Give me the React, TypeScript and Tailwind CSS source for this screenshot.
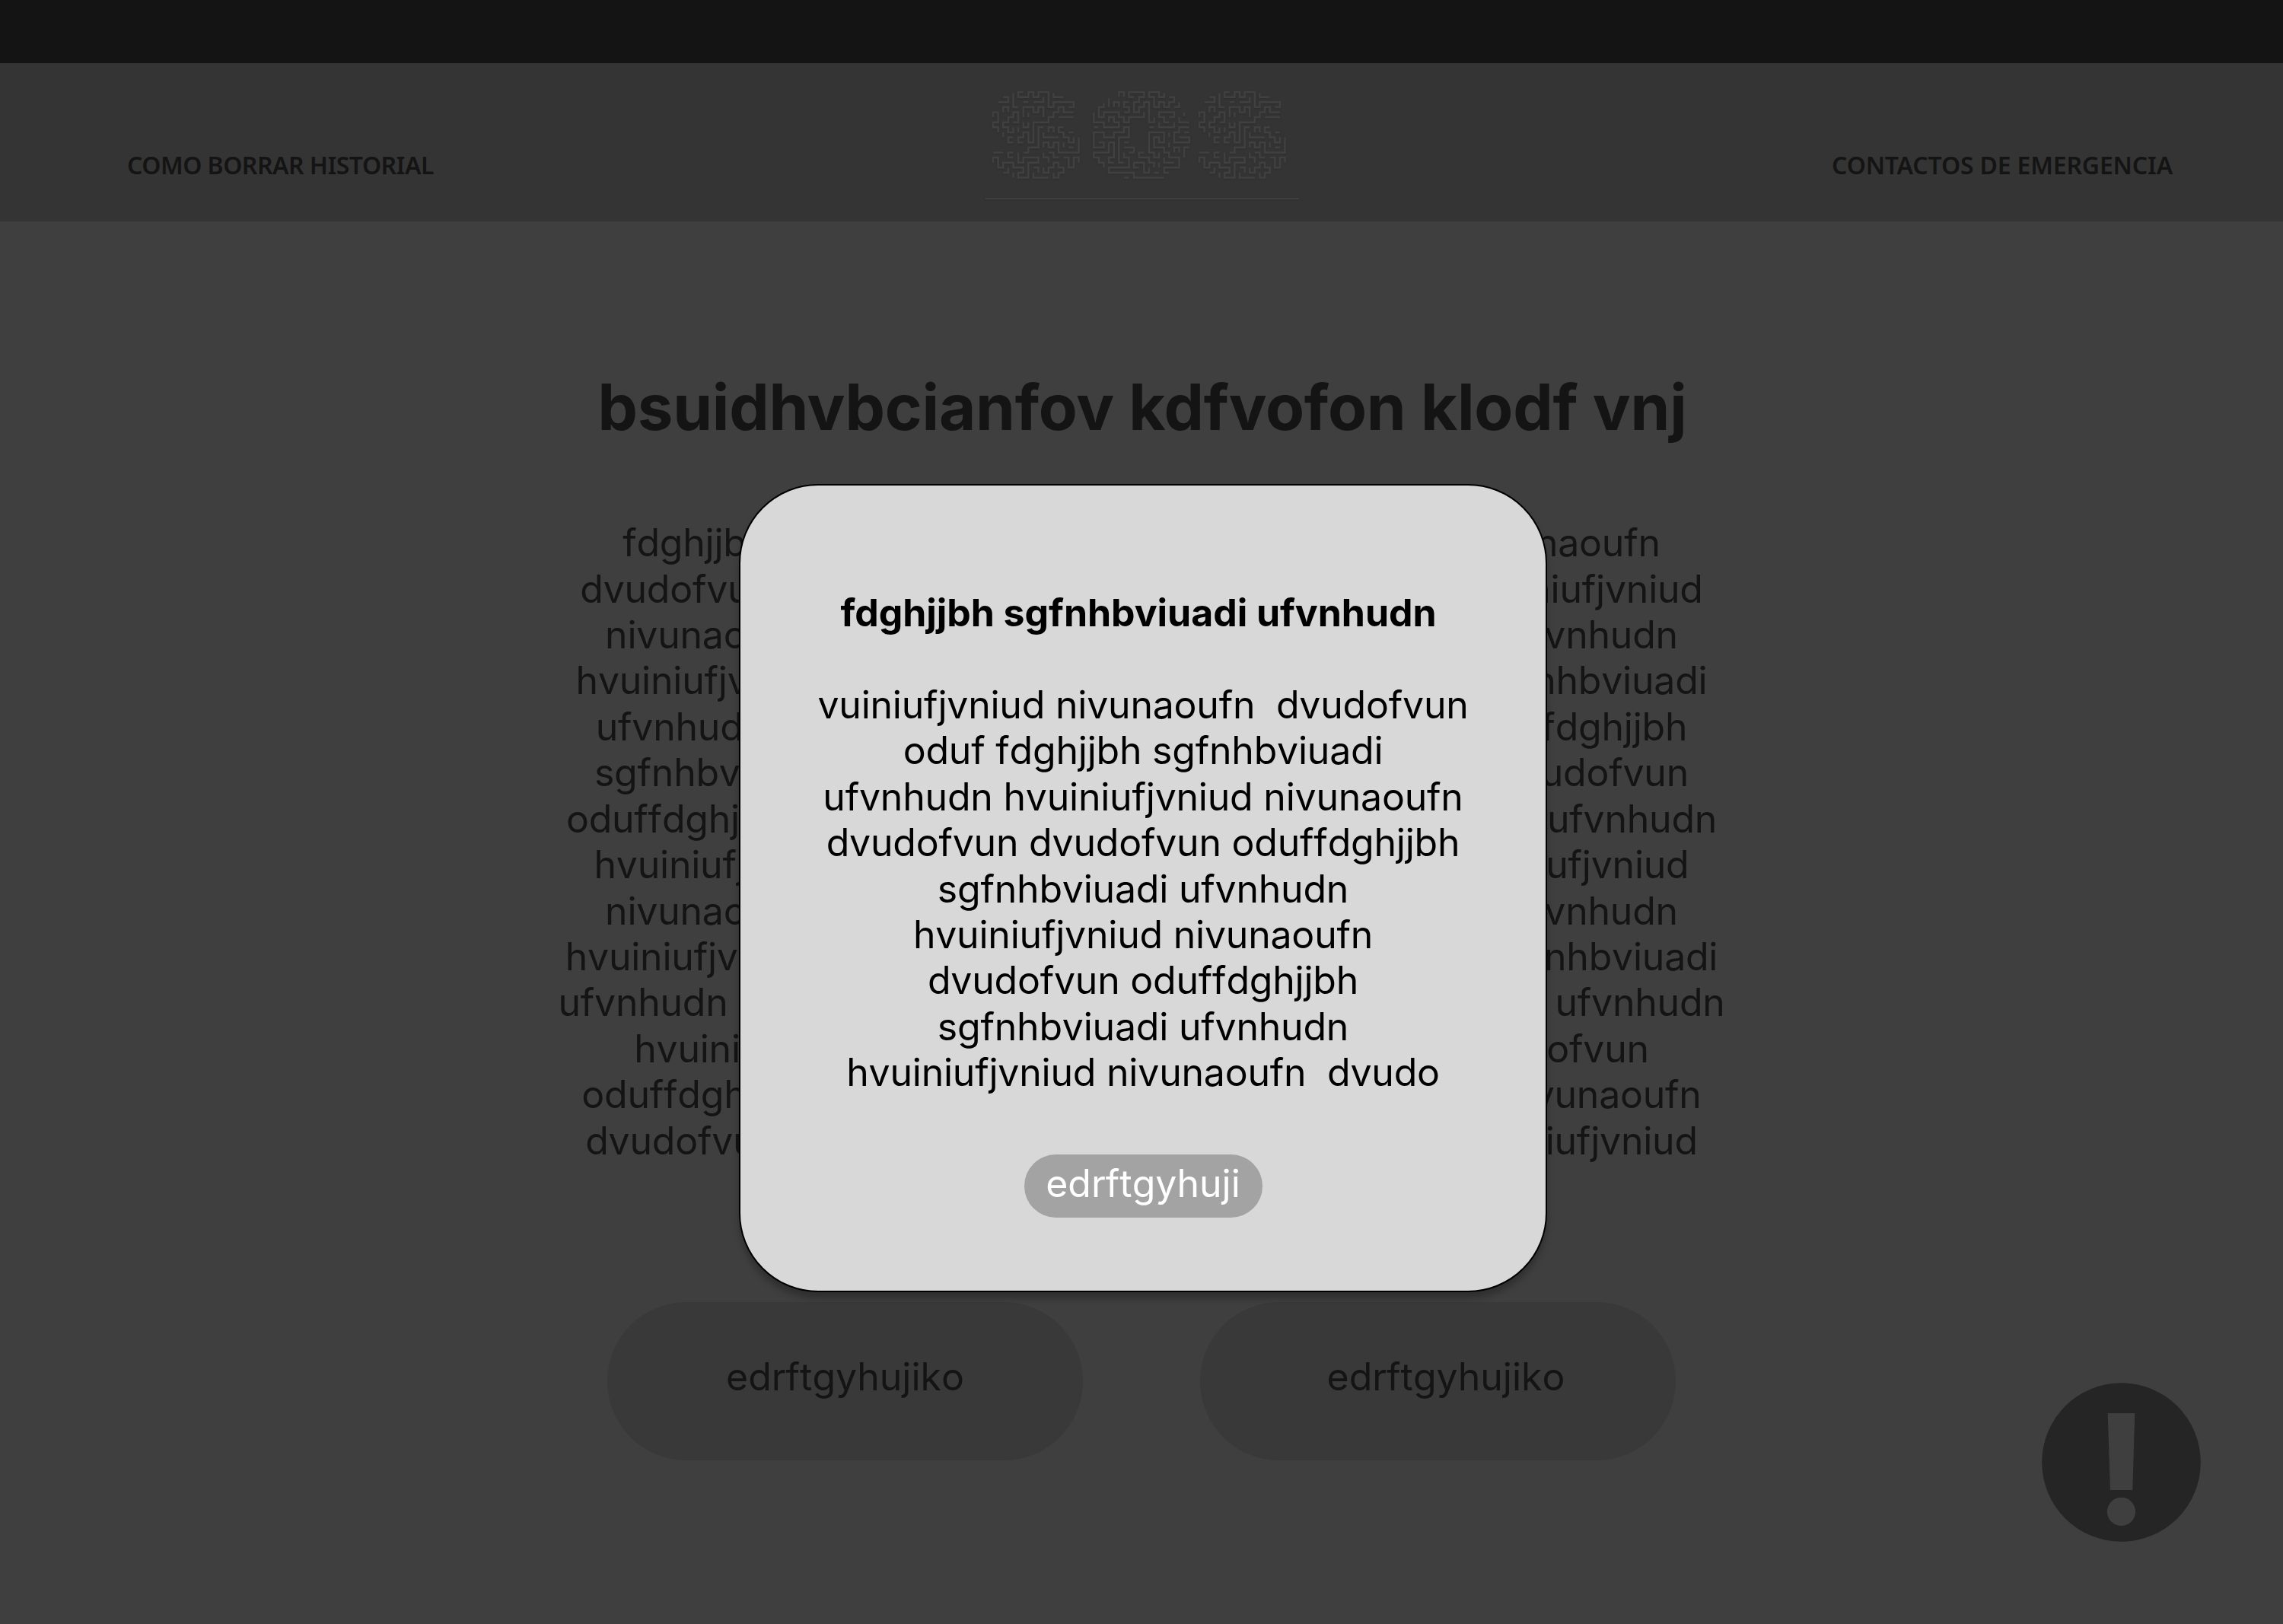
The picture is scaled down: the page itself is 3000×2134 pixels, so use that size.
const S_PATH =
  'M2 1H3V2H1M4 .2V3H5M6 0H5V1H7V0H8V1H9V0H11V3H12V2H16V3H15M12 .2V1H14M6 2H7M10 1V2H8M2 4V3H3V4M0 5V4H1V6H0V7H1V8M4 5V4H5V6H4M4 4V5H3V6H2V7H3V8H4V7M5 7V8M6 5V3H8V4H9V3H10V5M7 4V5M6 6V7H7V6M6 10H5V9H6V8H7V10H8V6H11V5H12V4H13V3H14V4H16M13 5H16M10 7H9V11H7V12H6M11 8V7H12V8M14 7H13V8H14V9H15V10H16V9M15 8H16M10 8V9H13M10 11V10H11V11H12V10H13V12H17V9M14 10V11M15 11H16M2 8V9M4 9H3V10H4M0 12H2M4 12H3V13H4M5 12V14H6V13H9V14H7V17H5V16H6V15H4V14H2V15H1V13H0V14M2 16H3V15M4 16V17M8 16V17H11M8 15H9V16M10 12V13H11V14M11 12H12V13H13M10 15V16H11V15H12V14H13V15H14V16H13V17H12V16M14 13H15V15H16V13H17V14';

const O_PATH =
  'M5 1V0H6V1M8 1H7V0H10V1H9V2H8V4H9V3H10V2H11V6H12V5M3 1.2V3M4 3V2H5V3M7 2H6V3H7V4H6M2 2.2V3H1V5H2V4H5V5H6V6H7V5H10V4M3 6V5H4V6M0 4V6H2V7H5V6H4M0 7H.9M6 7V8H4V9H2V8H0V11H2V10H1M5.8 7H7V9H5V14H6M3 10H4V13H3V14H4M3 10V12H0V13H1V14H2V15M6 10H7M6 11H8V12H7M6 12V13H7V15H3V16H8V17H14M6 17H7M10 12H9V13H11V14H12V15M9 15H8V14H10V16H11V15M13 12V13H12V12H11V8H14V10H13V9H12V11H14V12H15V13H17V15H14V16H15M14 13V14H16M13 14V15M12 16H13M14 .2V1H13V0H11V1H12V3H13V2H14V3H15V2H16V1H15M17 2V3H16M15 5H16V4H13V5H14V6H15M18 4V4.8M17 5V6H19M13 6V7H16V6M11 7H12M19 7H17V8H16V10H19V9H17M18 8H19M15 8V9M15 10V11M16 12V11H17V12M19 11H18V13';

const BODY_LINES = [
  'fdghjjbh sgfnhbviuadi ufvnhudn hvuiniufjvniud nivunaoufn',
  'dvudofvun oduf fdghjjbh sgfnhbviuadi ufvnhudn hvuiniufjvniud',
  'nivunaoufn  dvudofvun oduffdghjjbh sgfnhbviuadi ufvnhudn',
  'hvuiniufjvniud nivunaoufn dvudofvunoduffdghjjbh sgfnhbviuadi',
  'ufvnhudn hvuiniufjvniud nivunaoufn  dvudofvun oduffdghjjbh',
  'sgfnhbviuadi ufvnhudn hvuiniufjvniud nivunaoufn  dvudofvun',
  'oduffdghjjbh sgfnhbviuadi hvuiniufjvniud sgfnhbviuadi ufvnhudn',
  'hvuiniufjvniud nivunaoufn fdghjjbh sgfnhbviuadi vuiniufjvniud',
  'nivunaoufn  dvudofvun oduffdghjjbh sgfnhbviuadi ufvnhudn',
  'hvuiniufjvniud nivunaoufn  dvudofvun oduffdghjjbh sgfnhbviuadi',
  'ufvnhudn  sgfnhbviuadi fdghjjbh fdghjjbh sgfnhbviuadi  ufvnhudn',
  'hvuiniufjvniud oduf hvuiniufjvniud nivunaoufn dvudofvun',
  'oduffdghjjbh sgfnhbviuadi ufvnhudn hvuiniufjvniud nivunaoufn',
  'dvudofvun oduffdghjjbh sgfnhbviuadi ufvnhudn hvuiniufjvniud',
];

const MODAL_LINES = [
  'vuiniufjvniud nivunaoufn  dvudofvun',
  'oduf fdghjjbh sgfnhbviuadi',
  'ufvnhudn hvuiniufjvniud nivunaoufn',
  'dvudofvun dvudofvun oduffdghjjbh',
  'sgfnhbviuadi ufvnhudn',
  'hvuiniufjvniud nivunaoufn',
  'dvudofvun oduffdghjjbh',
  'sgfnhbviuadi ufvnhudn',
  'hvuiniufjvniud nivunaoufn  dvudo',
];

function Logo() {
  return (
    <svg width="412" height="150" viewBox="0 0 412 150" fill="none" stroke="#404040" className="drop-shadow-[0_1px_1px_rgba(0,0,0,0.12)]">
      <g strokeWidth="0.38">
        <path d={S_PATH} transform="translate(10 7) scale(6.62)" />
        <path d={O_PATH} transform="translate(142.3 7) scale(6.6 6.62)" />
        <path d={S_PATH} transform="translate(281 7) scale(6.62)" />
      </g>
      <path d="M0 147H412" strokeWidth="2" />
    </svg>
  );
}

function Header() {
  return (
    <header className="flex h-[208px] items-start justify-between bg-[#343434] pr-[145px] pl-[166px] font-['Noto_Sans'] text-[32px] leading-[44px] font-semibold">
      <a className="mt-[112px] w-[541px] pl-px tracking-[-0.52px] whitespace-nowrap">COMO BORRAR HISTORIAL</a>
      <div className="mt-[31px]">
        <Logo />
      </div>
      <a className="mt-[112px] w-[560px] text-right tracking-[-0.18px] whitespace-nowrap">CONTACTOS DE EMERGENCIA</a>
    </header>
  );
}

function Modal() {
  return (
    <div className="absolute top-[636px] left-[971px] flex h-[1062px] w-[1062px] flex-col items-center rounded-[104px] border-2 border-black bg-[#d8d8d8] pt-[137px] text-[50px] leading-[60.42px] text-black shadow-[0_8px_8px_rgba(0,0,0,0.25)]">
      <h2 className="mr-3 font-bold tracking-[-0.05px] whitespace-pre">fdghjjbh sgfnhbviuadi ufvnhudn</h2>
      <div className="mt-[60.42px] text-center tracking-[-0.22px] whitespace-pre [font-kerning:none]">
        {MODAL_LINES.map((line, i) => (
          <p key={i}>{line}</p>
        ))}
      </div>
      <button className="mt-[77px] flex h-[83px] w-[313px] justify-center rounded-[42px] bg-[#a3a3a3] pt-[8px] text-white [font-kerning:none]">
        edrftgyhuji
      </button>
    </div>
  );
}

export default function App() {
  return (
    <div className="relative h-[2134px] w-[3000px] overflow-hidden bg-[#3f3f3f] font-[Inter,sans-serif] text-[#141414] [font-variant-ligatures:none]">
      <div className="h-[83px] bg-[#141414]" />
      <Header />
      <main className="flex flex-col items-center">
        <h1 className="mt-[193px] ml-[2px] text-[83.33px] leading-[101px] font-bold tracking-[-0.25px] whitespace-pre">
          bsuidhvbcianfov kdfvofon klodf vnj
        </h1>
        <div className="mt-[98.2px] text-center text-[50px] leading-[60.42px] tracking-[-0.23px] whitespace-pre [font-kerning:none]">
          {BODY_LINES.map((line, i) => (
            <p key={i}>{line}</p>
          ))}
        </div>
        <div className="mt-[181.8px] flex gap-[154px] text-[50px] leading-[60.5px] [font-kerning:none]">
          <button className="h-[208px] w-[625px] rounded-[104px] bg-[#393939] pb-3">edrftgyhujiko</button>
          <button className="h-[208px] w-[625px] rounded-[104px] bg-[#393939] pb-3 pl-[21px]">edrftgyhujiko</button>
        </div>
      </main>
      <svg className="absolute top-[1817px] left-[2683px]" width="209" height="209" viewBox="0 0 209 209">
        <circle cx="104.5" cy="104.5" r="104.3" fill="#252525" />
        <path d="M86.7 40H122.3L119.3 141H90Z" fill="#3f3f3f" />
        <circle cx="104.5" cy="169.3" r="18.6" fill="#3f3f3f" />
      </svg>
      <Modal />
    </div>
  );
}
